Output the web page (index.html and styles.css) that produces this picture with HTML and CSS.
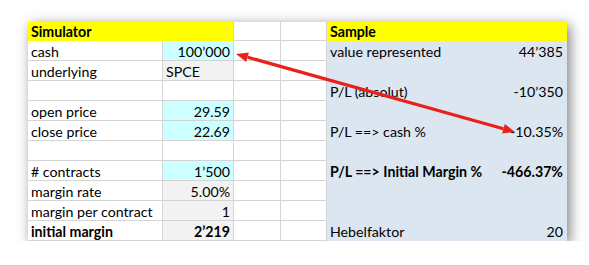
FILE: index.html
```html
<!DOCTYPE html>
<html>
<head>
<meta charset="utf-8">
<link rel="stylesheet" href="styles.css">
</head>
<body>
<div class="sheet">
  <div class="sim">
    <div class="c hdr bold">Simulator</div><div class="c hdr"></div><div class="c"></div><div class="c"></div>
    <div class="c">cash</div><div class="c cyan num">100’000</div><div class="c"></div><div class="c"></div>
    <div class="c">underlying</div><div class="c gray">SPCE</div><div class="c"></div><div class="c"></div>
    <div class="c"></div><div class="c"></div><div class="c"></div><div class="c"></div>
    <div class="c">open price</div><div class="c cyan num">29.59</div><div class="c"></div><div class="c"></div>
    <div class="c">close price</div><div class="c cyan num">22.69</div><div class="c"></div><div class="c"></div>
    <div class="c"></div><div class="c"></div><div class="c"></div><div class="c"></div>
    <div class="c"># contracts</div><div class="c cyan num">1’500</div><div class="c"></div><div class="c"></div>
    <div class="c">margin rate</div><div class="c gray num">5.00%</div><div class="c"></div><div class="c"></div>
    <div class="c">margin per contract</div><div class="c gray num">1</div><div class="c"></div><div class="c"></div>
    <div class="c bold">initial margin</div><div class="c gray num bold">2’219</div><div class="c"></div><div class="c"></div>
  </div>
  <div class="sample">
    <div class="s hdr bold">Sample</div><div class="s hdr"></div>
    <div class="s">value represented</div><div class="s num">44’385</div>
    <div class="s"></div><div class="s"></div>
    <div class="s">P/L (absolut)</div><div class="s num">-10’350</div>
    <div class="s"></div><div class="s"></div>
    <div class="s">P/L ==&gt; cash %</div><div class="s num">-10.35%</div>
    <div class="s"></div><div class="s"></div>
    <div class="s bold pre">P/L  ==&gt;  Initial Margin %</div><div class="s num bold">-466.37%</div>
    <div class="s"></div><div class="s"></div>
    <div class="s"></div><div class="s"></div>
    <div class="s">Hebelfaktor</div><div class="s num">20</div>
  </div>
  <svg class="arrow" width="539" height="219" viewBox="0 0 539 219">
    <line x1="219.6" y1="35.2" x2="475.4" y2="106.8" stroke="#e8211d" stroke-width="3.2"/>
    <polygon points="208,32 218.2,40.1 220.9,30.4" fill="#e8211d"/>
    <polygon points="487,110 474.1,111.6 476.8,102" fill="#e8211d"/>
  </svg>
</div>
</body>
</html>
```
FILE: styles.css
```css
html, body {
  margin: 0;
  padding: 0;
  background: #fff;
}
body {
  padding: 22px 0 0 28px;
  font-family: Lato, "Open Sans", sans-serif;
  font-size: 14.2px;
  color: #000;
}
.sheet {
  position: relative;
  display: flex;
  width: 539px;
  height: 219px;
  background: #fff;
  box-shadow: 3px 3px 12px rgba(0, 0, 0, 0.5);
}
.sim {
  display: grid;
  grid-template-columns: 135px 71px 47px 46px;
  grid-template-rows: 19px repeat(10, 20px);
}
.c {
  box-sizing: border-box;
  border-bottom: 1px solid #d4d4d4;
  border-right: 1px solid #d4d4d4;
  padding: 0 3px 0 3px;
  display: flex;
  align-items: flex-end;
  white-space: nowrap;
  line-height: 16px;
}
.hdr {
  background: #ffff00;
  border-color: #ffff00;
}
.sim .hdr:nth-child(2) {
  border-right-color: #d4d4d4;
}
.cyan {
  background: #ccffff;
}
.gray {
  background: #f2f2f2;
}
.num {
  justify-content: flex-end;
}
.bold {
  font-weight: bold;
}
.pre {
  white-space: pre;
}
.sample {
  flex: 1;
  display: grid;
  grid-template-columns: 1fr 80px;
  grid-template-rows: 19px repeat(10, 20px);
  background: #dce6f1;
}
.s {
  display: flex;
  align-items: flex-end;
  padding: 0 4px 1px 3px;
  white-space: nowrap;
  line-height: 16px;
}
.arrow {
  position: absolute;
  left: 0;
  top: 0;
  pointer-events: none;
}
```
